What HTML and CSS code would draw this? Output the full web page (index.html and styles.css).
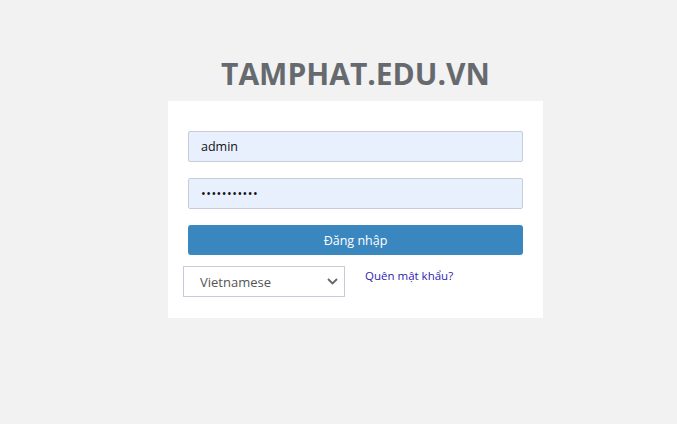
FILE: index.html
```html
<!DOCTYPE html>
<html lang="vi">
<head>
    <meta charset="UTF-8">
    <meta name="viewport" content="width=device-width, initial-scale=1.0">
    <link rel="stylesheet" href="styles.css">
</head>
<body>
    <h1 class="site-title">TAMPHAT.EDU.VN</h1>

    <form class="login-box">
        <input type="text" class="field" value="admin">
        <input type="password" class="field pass" value="admin123456">
        <button type="button" class="login-btn">Đăng nhập</button>

        <div class="login-footer">
            <div class="lang-select">
                <span>Vietnamese</span>
                <svg width="11" height="7" viewBox="0 0 11 7"><path d="M1 1l4.5 4.5L10 1" fill="none" stroke="#666" stroke-width="1.8"/></svg>
            </div>
            <a href="#" class="forgot">Quên mật khẩu?</a>
        </div>
    </form>
</body>
</html>
```

FILE: styles.css
```css
body {
    background-color: #f2f2f2;
    font-family: "Open Sans", "Noto Sans", sans-serif;
    margin: 0;
    padding-left: 34px;
    display: flex;
    flex-direction: column;
    align-items: center;
}
.site-title {
    margin: 53px 0 0;
    height: 48px;
    font-size: 30px;
    font-weight: 700;
    line-height: 42px;
    color: #666a6e;
}
.login-box {
    width: 335px;
    background-color: #fff;
    padding: 30px 20px 21px;
    display: flex;
    flex-direction: column;
}
.field {
    height: 31px;
    box-sizing: border-box;
    margin: 0 0 16px;
    padding: 0 12px;
    border: 1px solid #c6ccd8;
    border-radius: 2px;
    background-color: #e8f0fe;
    font-family: "Open Sans", "Noto Sans", sans-serif;
    font-size: 12.5px;
    color: #111;
    outline: none;
}
.pass {
    letter-spacing: 0.5px;
}
.login-btn {
    height: 30px;
    border: none;
    border-radius: 3px;
    background-color: #3a87bf;
    color: #fff;
    font-family: "Open Sans", "Noto Sans", sans-serif;
    font-size: 12.5px;
    cursor: pointer;
}
.login-footer {
    display: flex;
    align-items: flex-start;
    margin: 11px 0 0 -5px;
}
.lang-select {
    width: 162px;
    height: 31px;
    box-sizing: border-box;
    border: 1px solid #c6ccd8;
    display: flex;
    align-items: center;
    justify-content: space-between;
    padding: 0 6px 0 16px;
    font-size: 13px;
    color: #555;
}
.forgot {
    margin: 2px 0 0 20px;
    font-size: 11.5px;
    color: #2b23b0;
    text-decoration: none;
}
```
